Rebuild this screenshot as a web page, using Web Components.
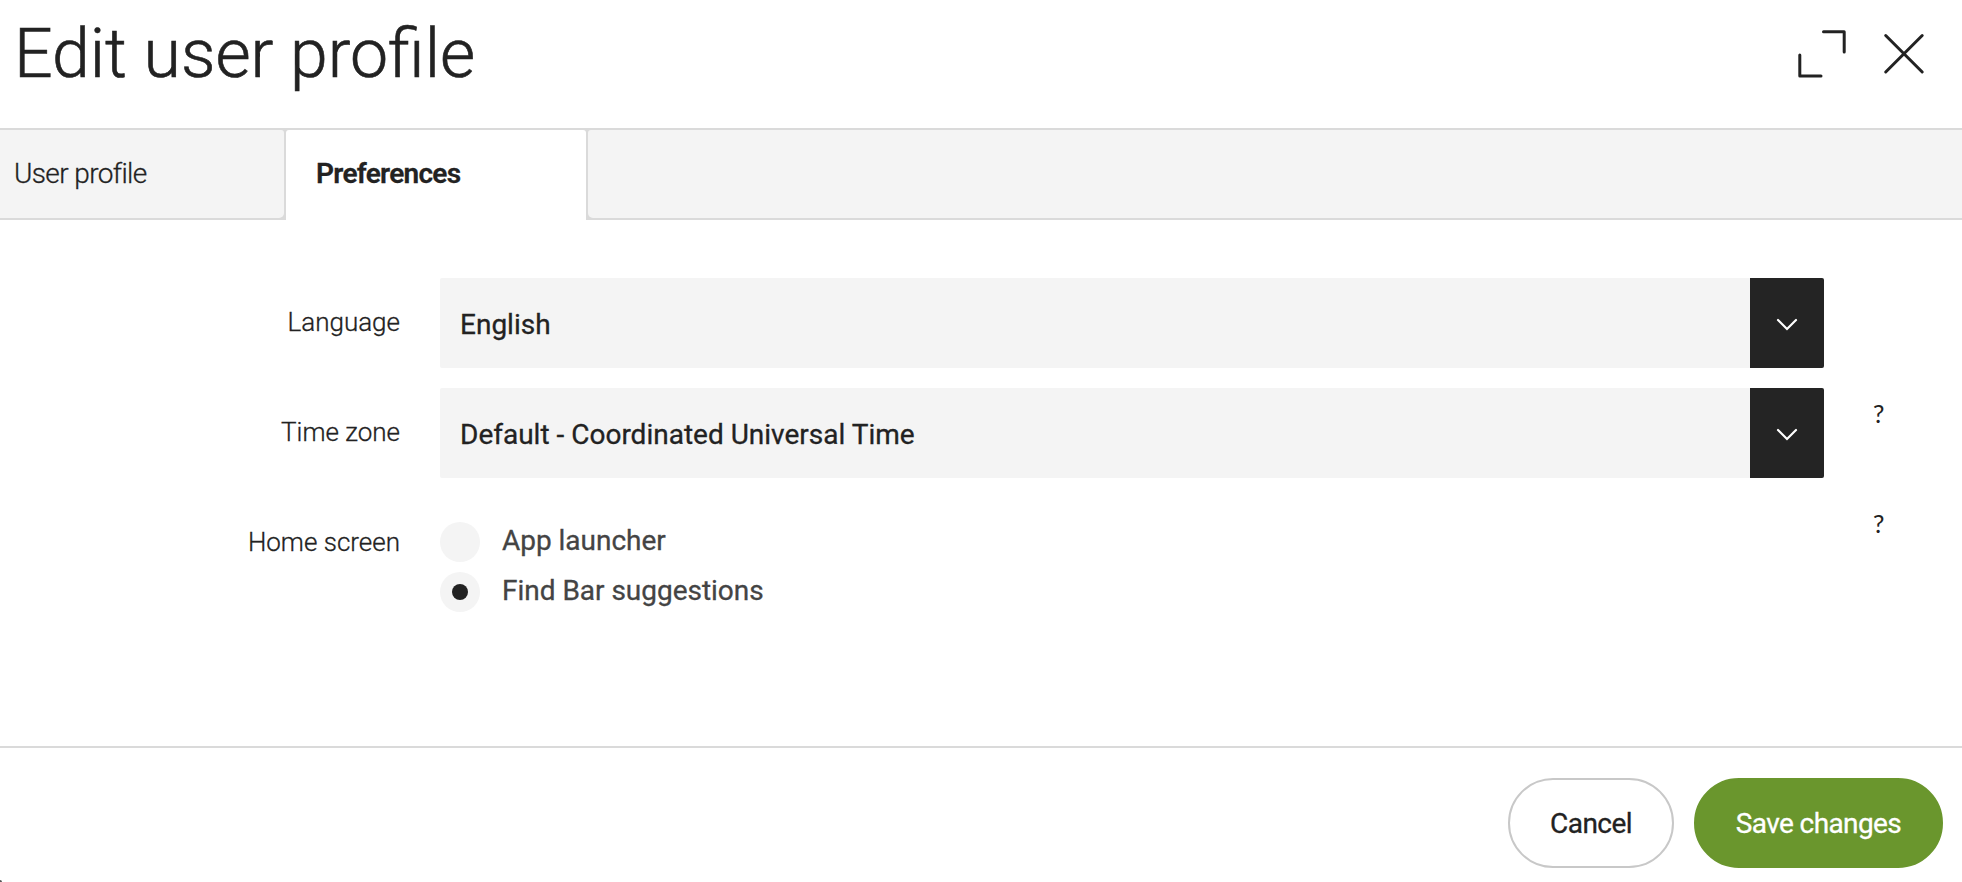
<!DOCTYPE html>
<html lang="en">
<head>
<meta charset="utf-8">
<title>Edit user profile</title>
<style>
html, body { margin: 0; height: 100%; }
body { background: #fff; color: #222; font-family: Roboto, sans-serif; overflow: hidden; -webkit-text-stroke: .3px currentColor; }
</style>
</head>
<body>
<profile-dialog>
  <dialog-header slot="header">Edit user profile</dialog-header>
  <tab-strip slot="tabs">
    <tab-item>User profile</tab-item>
    <tab-item active>Preferences</tab-item>
  </tab-strip>
  <form-row label="Language"><select-box>English</select-box></form-row>
  <form-row label="Time zone" help><select-box>Default - Coordinated Universal Time</select-box></form-row>
  <form-row label="Home screen" help>
    <radio-option>App launcher</radio-option>
    <radio-option checked>Find Bar suggestions</radio-option>
  </form-row>
  <pill-button slot="footer">Cancel</pill-button>
  <pill-button slot="footer" primary>Save changes</pill-button>
</profile-dialog>
<script>
function define(name, html) {
  customElements.define(name, class extends HTMLElement {
    constructor() {
      super();
      const t = document.createElement('template');
      t.innerHTML = html;
      this.attachShadow({ mode: 'open' }).append(t.content.cloneNode(true));
    }
    connectedCallback() {
      const label = this.shadowRoot.querySelector('.label');
      if (label) label.textContent = this.getAttribute('label');
    }
  });
}

define('profile-dialog', `
<style>
  :host { display: flex; flex-direction: column; height: 882px; width: 1962px; position: relative; background: #fff; }
  main { flex: 1; padding-top: 58px; display: flex; flex-direction: column; gap: 20px; }
  footer { box-sizing: border-box; height: 136px; border-top: 2px solid #dadada; display: flex; justify-content: flex-end; gap: 20px; padding: 30px 19px 0 0; }
  .corner { position: absolute; left: 0; bottom: 0; width: 2px; height: 2px; background: #555; border-top-right-radius: 2px; }
</style>
<slot name="header"></slot>
<slot name="tabs"></slot>
<main><slot></slot></main>
<footer><slot name="footer"></slot></footer>
<span class="corner"></span>`);

define('dialog-header', `
<style>
  :host { display: flex; height: 128px; box-sizing: border-box; padding: 0 36px 0 14px; align-items: flex-start; }
  h1 { margin: 0; flex: 1; font-weight: 300; font-size: 68px; line-height: 108px; -webkit-text-stroke: .6px currentColor; }
  svg { display: block; margin-top: 28px; fill: none; stroke: #222; stroke-width: 3; stroke-linecap: round; stroke-linejoin: round; }
  .close { margin-left: 34px; }
</style>
<h1><slot></slot></h1>
<svg width="52" height="52" viewBox="0 0 52 52"><path d="M27.500 3.700H48.200V24M3.800 27V48H25"/></svg>
<svg class="close" width="44" height="52" viewBox="0 0 44 52"><path d="M3.700 7.500L40.200 44M40.200 7.500L3.700 44"/></svg>`);

define('tab-strip', `
<style>
  :host { display: flex; height: 92px; box-sizing: border-box; background: #dadada; padding: 2px 0; }
  .rest { flex: 1; background: #f4f4f4; border-radius: 3px 0 0 5px; }
</style>
<slot></slot><div class="rest"></div>`);

define('tab-item', `
<style>
  :host { display: block; box-sizing: border-box; width: 284px; margin-right: 2px; padding-left: 14px; height: 88px; line-height: 87px; font-size: 28px; font-weight: 300; letter-spacing: -.62px; background: #f4f4f4; border-radius: 0 3px 5px 0; }
  :host([active]) { width: 300px; height: 90px; padding-left: 30px; background: #fff; font-weight: 600; letter-spacing: -.7px; border-radius: 3px 3px 0 0; }
</style>
<slot></slot>`);

define('form-row', `
<style>
  :host { display: grid; grid-template-columns: 400px 1384px 1fr; column-gap: 40px; min-height: 90px; }
  .label { text-align: right; font-size: 26px; font-weight: 300; line-height: 88px; }
  .content { display: flex; flex-direction: column; }
  .help { display: none; padding: 10px 0 0 9px; font: 25.5px/31px Lato, sans-serif; -webkit-text-stroke: 0; }
  :host([help]) .help { display: block; }
</style>
<div class="label"></div><div class="content"><slot></slot></div><div class="help">?</div>`);

define('select-box', `
<style>
  :host { display: flex; height: 90px; border-radius: 2px; overflow: hidden; background: #f4f4f4; }
  .value { flex: 1; padding: 2px 0 0 20px; font-size: 28px; line-height: 90px; }
  .arrow { width: 74px; background: #242424; display: flex; align-items: center; justify-content: center; }
  svg { display: block; margin-top: 3px; }
</style>
<div class="value"><slot></slot></div>
<div class="arrow"><svg width="22" height="14" viewBox="0 0 22 14"><path d="M2 2L11 11L20 2" fill="none" stroke="#fff" stroke-width="2.200" stroke-linecap="round"/></svg></div>`);

define('radio-option', `
<style>
  :host { display: flex; height: 50px; align-items: flex-start; gap: 22px; color: #444; font-size: 28px; }
  :host(:first-of-type) { margin-top: 24px; }
  .dot { width: 40px; height: 40px; border-radius: 50%; background: #f4f4f4; display: flex; align-items: center; justify-content: center; }
  :host([checked]) .dot::after { content: ""; width: 16px; height: 16px; border-radius: 50%; background: #222; }
  .text { line-height: 37px; letter-spacing: -.02px; }
</style>
<span class="dot"></span><span class="text"><slot></slot></span>`);

define('pill-button', `
<style>
  :host { display: block; box-sizing: border-box; width: 166px; height: 90px; border: 2px solid #c8c8c8; border-radius: 45px; text-align: center; font-size: 28px; line-height: 87px; letter-spacing: -.56px; }
  :host([primary]) { width: 249px; border-color: #6a962d; background: #6a962d; color: #fff; line-height: 88px; letter-spacing: -.6px; }
</style>
<slot></slot>`);
</script>
</body>
</html>
